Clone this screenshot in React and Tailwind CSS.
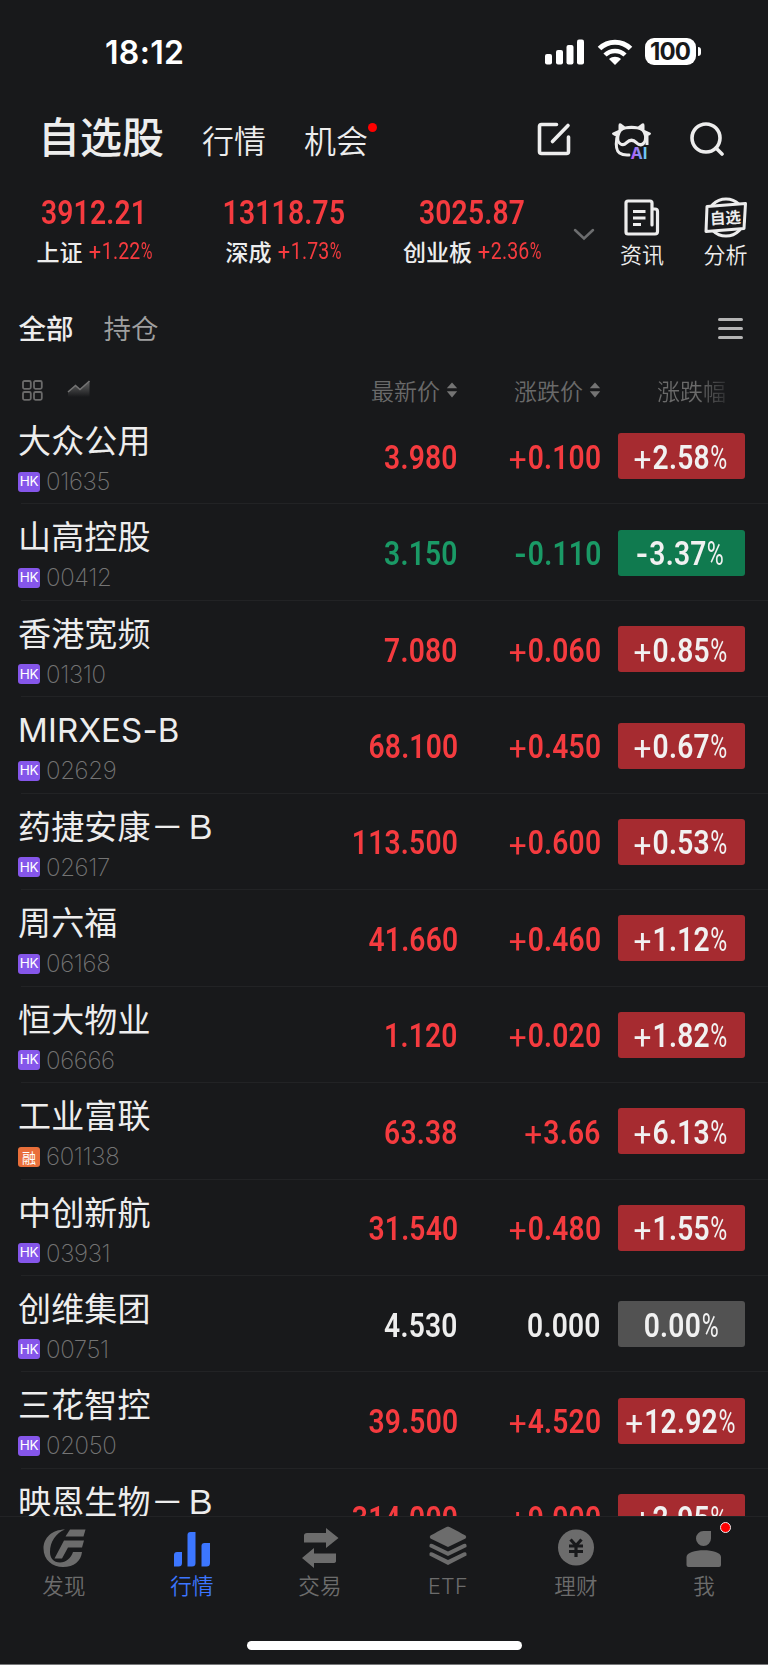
const INDICES = [
  { name: '上证', value: '3912.21', change: '+1.22%' },
  { name: '深成', value: '13118.75', change: '+1.73%' },
  { name: '创业板', value: '3025.87', change: '+2.36%' },
]

const STOCKS = [
  { name: '大众公用', code: '01635', price: '3.980', diff: '+0.100', pct: '+2.58%' },
  { name: '山高控股', code: '00412', price: '3.150', diff: '-0.110', pct: '-3.37%' },
  { name: '香港宽频', code: '01310', price: '7.080', diff: '+0.060', pct: '+0.85%' },
  { name: 'MIRXES-B', code: '02629', price: '68.100', diff: '+0.450', pct: '+0.67%' },
  { name: '药捷安康－Ｂ', code: '02617', price: '113.500', diff: '+0.600', pct: '+0.53%' },
  { name: '周六福', code: '06168', price: '41.660', diff: '+0.460', pct: '+1.12%' },
  { name: '恒大物业', code: '06666', price: '1.120', diff: '+0.020', pct: '+1.82%' },
  { name: '工业富联', code: '601138', margin: true, price: '63.38', diff: '+3.66', pct: '+6.13%' },
  { name: '中创新航', code: '03931', price: '31.540', diff: '+0.480', pct: '+1.55%' },
  { name: '创维集团', code: '00751', price: '4.530', diff: '0.000', pct: '0.00%' },
  { name: '三花智控', code: '02050', price: '39.500', diff: '+4.520', pct: '+12.92%' },
  { name: '映恩生物－Ｂ', price: '314.000', diff: '+9.000', pct: '+2.95%' },
]

const TEXT_COLOR = { up: 'text-[#f53b3f]', down: 'text-[#1a9a66]', flat: 'text-[#ededed]' }
const PILL_COLOR = { up: 'bg-[#a62b30]', down: 'bg-[#107a4f]', flat: 'bg-[#525252]' }

function trendOf(diff) {
  if (diff.startsWith('+')) return 'up'
  if (diff.startsWith('-')) return 'down'
  return 'flat'
}

// narrow figures, the percent sign is drawn lighter than the digits
function Num({ value, className = '' }) {
  const sign = /^[+-]/.test(value) ? value[0] : ''
  const isPct = value.endsWith('%')
  const digits = value.slice(sign.length, isPct ? -1 : undefined)
  return (
    <span className={`inline-block scale-x-[0.83] whitespace-nowrap font-['Roboto'] leading-none tracking-[0.008em] ${className}`}>
      {sign === '+' && <span className="relative top-[0.06em] mr-[0.03em] inline-block origin-right scale-x-[1.12] font-normal">+</span>}
      {sign === '-' && <span className="mr-[0.03em] inline-block origin-right scale-x-[1.2]">-</span>}
      {digits}
      {isPct && <span className="-mr-[0.13em] ml-[0.02em] inline-block origin-left scale-x-[0.82] font-normal">%</span>}
    </span>
  )
}

function StatusBar() {
  return (
    <div className="flex h-[103px] shrink-0 items-center justify-between pl-[105px] pr-[67px]">
      <span className="mt-[3px] font-['Inter'] text-[32px] font-semibold leading-none tracking-[0.01em] text-white">18:12</span>
      <div className="flex items-center text-white">
        <svg width="40" height="26" viewBox="0 0 40 26" fill="currentColor">
          <rect x="0" y="15" width="7" height="10.5" rx="2" />
          <rect x="11" y="11" width="7" height="14.5" rx="2" />
          <rect x="21.5" y="6" width="7" height="19.5" rx="2" />
          <rect x="32" y="0.5" width="7" height="25" rx="2" />
        </svg>
        <svg className="ml-3" width="36" height="26" viewBox="0 0 36 26" fill="none" stroke="currentColor">
          <path d="M2.5 9.5C11 1 25 1 33.5 9.5" strokeWidth="5" />
          <path d="M8 16C13.5 10.5 22.5 10.5 28 16" strokeWidth="4.5" />
          <path d="M12 20C15.5 17 20.5 17 24 20L18 26Z" fill="currentColor" stroke="none" />
        </svg>
        <div className="ml-3 flex h-[27px] w-[51px] items-center justify-center rounded-[9px] bg-white font-['Inter'] text-[24px] font-bold leading-none tracking-[-0.04em] text-[#18191b]">
          100
        </div>
        <div className="ml-[2px] h-[9px] w-[3.5px] rounded-r-full bg-white" />
      </div>
    </div>
  )
}

function MascotIcon() {
  return (
    <svg width="42" height="40" viewBox="0 0 42 40" fill="none">
      <defs>
        <linearGradient id="ai" x1="20" y1="0" x2="37" y2="0" gradientUnits="userSpaceOnUse">
          <stop offset="0" stopColor="#c054f2" />
          <stop offset="0.6" stopColor="#7d9df5" />
          <stop offset="1" stopColor="#63e6f5" />
        </linearGradient>
      </defs>
      <path d="M7.5 9V4.5Q7.5 1.5 10 2.5L14 5.5Q20.5 4 27 5.5L31 2.5Q33.5 1.5 33.5 4.5V9L39 11.5Q41 12.5 39 14L36 15.5Q36 22 32.5 24.5Q28.5 27 24.5 23Q20.5 19 16.5 23Q12.500 27 8.5 24Q5.5 22 5 15.5L2 14Q0 12.5 2 11.5Z" fill="#ededed" />
      <path d="M8.500 15Q9.500 9 15 8.2Q20.5 7.7 26 8.2Q32 9 33 15Q33.500 20 31 21.5Q28.5 23 26.5 20.5Q20.5 14.500 14.5 20.5Q12 23 10 21.5Q7.500 20 8.500 15Z" fill="#18191b" />
      <path d="M5.8 17Q4 29 8.5 32Q12 34.5 18 34" stroke="#ededed" strokeWidth="3" strokeLinecap="round" />
      <path d="M36 15V24" stroke="#ededed" strokeWidth="3" />
      <text x="19.5" y="38" fill="url(#ai)" stroke="#18191b" strokeWidth="2" paintOrder="stroke" fontFamily="Inter" fontSize="16.5" fontWeight="700">AI</text>
    </svg>
  )
}

function Header() {
  return (
    <div className="flex h-[68px] shrink-0 items-center pl-[38px] pr-[44px] text-[#ededed]">
      <span className="-mt-[4px] text-[42px] font-medium leading-none">自选股</span>
      <span className="ml-[38px] mt-[3px] text-[32px] font-[350] leading-none">行情</span>
      <span className="relative ml-[38px] mt-[3px] text-[32px] font-[350] leading-none">
        机会
        <i className="absolute -right-[9px] top-0 size-[9px] rounded-full bg-[#fe0000]" />
      </span>
      <div className="ml-auto flex items-center pt-[4px]">
        <svg width="34" height="34" viewBox="0 0 34 34" fill="none" stroke="currentColor" strokeWidth="3.6" strokeLinecap="round" strokeLinejoin="round">
          <path d="M19.5 2.5H4.5Q2.5 2.5 2.5 4.5V29.5Q2.5 31.5 4.5 31.5H29.5Q31.5 31.5 31.5 29.5V15" />
          <path d="M15.5 19.5L31 3.5" />
        </svg>
        <div className="ml-[40px] pt-[4px]">
          <MascotIcon />
        </div>
        <svg className="ml-[37px]" width="34" height="34" viewBox="0 0 34 34" fill="none" stroke="currentColor" strokeWidth="3.6" strokeLinecap="round">
          <circle cx="16" cy="16" r="14" />
          <path d="M26 26L32 32" />
        </svg>
      </div>
    </div>
  )
}

function IndexBar() {
  return (
    <div className="flex h-[119px] shrink-0 pt-[23px]">
      {INDICES.map((item) => (
        <div key={item.name} className="flex w-[189px] shrink-0 flex-col items-center pt-[1px]">
          <Num value={item.value} className="text-[34px] font-semibold text-[#f53b3f]" />
          <div className="mt-[11px] flex items-center">
            <span className="whitespace-nowrap text-[23px] font-medium leading-none text-[#ededed]">{item.name}</span>
            <span className="ml-[7px] w-[63px] leading-none">
              <Num value={item.change} className="origin-left text-[23.5px] text-[#f53b3f]" />
            </span>
          </div>
        </div>
      ))}
      <div className="flex w-[34px] justify-center pt-[34px]">
        <svg width="22" height="13" viewBox="0 0 22 13" fill="none" stroke="#6c6d6f" strokeWidth="2.5" strokeLinecap="round">
          <path d="M2 2L11 10.5L20 2" />
        </svg>
      </div>
      <div className="flex w-[83px] flex-col items-center pr-[1px] pt-[5px] text-[#ededed]">
        <svg width="36" height="37" viewBox="0 0 36 37" fill="none" stroke="currentColor" strokeWidth="3.2" strokeLinejoin="round">
          <path d="M28 10H31Q33.5 10 33.5 12.5V32.5Q33.5 35 31 35H4Q2 35 2 33V4Q2 2 4 2H26Q28 2 28 4V26" strokeLinecap="round" />
          <path d="M9 12.5H21.5M9 19H21.5M9 25.5H17" />
        </svg>
        <span className="mt-[6px] text-[22px] font-[350] leading-none">资讯</span>
      </div>
      <div className="flex w-[83px] flex-col items-center pt-[3px] text-[#ededed]">
        <svg width="44" height="41" viewBox="0 0 44 41" fill="none" stroke="currentColor" strokeWidth="3">
          <circle cx="22" cy="20.5" r="18.5" />
          <path d="M3 9.5L41.5 6.5L40 31.5L2 34.5Z" fill="#18191b" strokeLinejoin="round" />
          <text x="21.5" y="26.5" textAnchor="middle" fill="currentColor" stroke="none" fontFamily="Noto Sans CJK SC" fontSize="15.5" fontWeight="700" transform="rotate(-3 21 20)">自选</text>
        </svg>
        <span className="mt-[4px] text-[22px] font-[350] leading-none">分析</span>
      </div>
    </div>
  )
}

function GroupTabs() {
  return (
    <div className="flex h-[76px] shrink-0 items-center pl-[18.5px] pr-[25px]">
      <span className="-mt-[1px] text-[27.5px] font-medium leading-none text-[#ededed]">全部</span>
      <span className="-mt-[1px] ml-[30px] text-[27.5px] font-[350] leading-none text-[#a0a0a0]">持仓</span>
      <div className="ml-auto flex w-[25px] flex-col gap-[6px]">
        <i className="h-[3px] rounded-full bg-[#b4b4b4]" />
        <i className="h-[3px] rounded-full bg-[#b4b4b4]" />
        <i className="h-[3px] rounded-full bg-[#b4b4b4]" />
      </div>
    </div>
  )
}

function SortIcon() {
  return (
    <svg width="12" height="16" viewBox="0 0 12 16" fill="#747474">
      <path d="M6 0.5L11.2 6.2H0.8Z" />
      <path d="M6 15.5L11.2 9.2H0.8Z" />
    </svg>
  )
}

function TableHead() {
  return (
    <div className="flex h-[42px] shrink-0 items-center pl-[22px] pt-[6px] text-[23px] font-[350] leading-none text-[#6a6a6a]">
      <svg width="21" height="21" viewBox="0 0 21 21" fill="none" stroke="currentColor" strokeWidth="1.8">
        <rect x="1" y="1" width="7.8" height="7.8" rx="1.5" />
        <rect x="12" y="1" width="7.8" height="7.8" rx="1.5" />
        <rect x="1" y="12" width="7.8" height="7.8" rx="1.5" />
        <rect x="12" y="12" width="7.8" height="7.8" rx="1.5" />
      </svg>
      <svg className="ml-[24px]" width="24" height="20" viewBox="0 0 24 20" fill="none">
        <defs>
          <linearGradient id="trend" x1="0" y1="2" x2="0" y2="17" gradientUnits="userSpaceOnUse">
            <stop offset="0" stopColor="#747474" stopOpacity="0.8" />
            <stop offset="1" stopColor="#747474" stopOpacity="0" />
          </linearGradient>
        </defs>
        <path d="M1 12L8.5 5.5L13 9.5L22.5 1V18H1Z" fill="url(#trend)" />
        <path d="M1 12L8.5 5.5L13 9.5L22.5 1" stroke="#747474" strokeWidth="1.6" />
      </svg>
      <div className="flex flex-1 items-center justify-end gap-[6px]">
        最新价
        <SortIcon />
      </div>
      <div className="flex w-[143px] items-center justify-end gap-[6px]">
        涨跌价
        <SortIcon />
      </div>
      <div className="w-[167px] pl-[56px]">
        <span className="bg-linear-to-r from-[#6a6a6a] from-60% to-[#2e2f31] bg-clip-text text-transparent">涨跌幅</span>
      </div>
    </div>
  )
}

function StockRow({ stock }) {
  const trend = trendOf(stock.diff)
  return (
    <div className="flex h-[96.45px] flex-col">
      <div className="flex flex-1 pl-[18px] pr-[23px]">
        <div className="flex flex-1 flex-col">
          <span className="mt-[16px] h-[34px] whitespace-nowrap font-['Inter','Noto_Sans_CJK_SC',sans-serif] text-[33px] font-[370] leading-[34px] tracking-[0.005em] text-[#ededed]">{stock.name}</span>
          {stock.code && (
            <div className="mt-[13px] flex items-center">
              {stock.margin ? (
                <span className="flex h-5 w-[22px] items-center justify-center rounded-[3px] bg-[#e96f3a] text-[14px] leading-none text-white">融</span>
              ) : (
                <span className="flex h-5 w-[22px] items-center justify-center rounded-[3px] bg-[#8556ea] font-['Inter'] text-[13.5px] leading-none tracking-[-0.03em] text-white">HK</span>
              )}
              <span className="ml-[6px] mt-[1px] font-['Inter'] text-[24px] font-extralight leading-5 tracking-[-0.015em] text-[#747474]">{stock.code}</span>
            </div>
          )}
        </div>
        <div className="flex w-[150px] items-center justify-end pt-[2px]">
          <Num value={stock.price} className={`origin-right text-[34px] font-semibold ${TEXT_COLOR[trend]}`} />
        </div>
        <div className="flex w-[143px] items-center justify-end pt-[2px]">
          <Num value={stock.diff} className={`origin-right text-[34px] font-semibold ${TEXT_COLOR[trend]}`} />
        </div>
        <div className="flex w-[144px] items-center justify-end pt-[1px]">
          <div className={`flex h-[46px] w-[127px] items-center justify-center rounded-[3px] pt-[1px] ${PILL_COLOR[trend]}`}>
            <Num value={stock.pct} className="text-[34px] font-semibold text-[#f1f1f1]" />
          </div>
        </div>
      </div>
      <div className="ml-[21px] h-px bg-[#222325]" />
    </div>
  )
}

const TABS = [
  {
    label: '发现',
    icon: (
      <>
        <path d="M22 0.5C9 0.5 0.5 9 0.5 19.5C0.5 31 9.5 38 20 38C31 38 38 32 39 23H30C28 29 23 33.5 17 33.5C10.5 33.5 7 29 7 23C7 12.5 13 4 22 0.5Z" />
        <path d="M27 0.5H42.5L40.5 7.5H22.5Z" />
        <path d="M21 11.5H41L39 18.5H25L19 29.5H11.5Z" />
      </>
    ),
  },
  {
    label: '行情',
    active: true,
    icon: (
      <>
        <path d="M3 26Q3 23 6 23H11V34Q11 37.5 7.5 37.5H3Z" />
        <path d="M16.5 6Q16.5 3 19.5 3H24.5V34Q24.5 37.5 21 37.5H16.5Z" />
        <path d="M30.5 17Q30.5 14 33.5 14H39V34Q39 37.5 35.5 37.5H30.5Z" />
      </>
    ),
  },
  {
    label: '交易',
    icon: (
      <>
        <path d="M5 6.5Q5 4 8 4H27V-1L39.5 9L27 19V13.5H5Z" />
        <path d="M37 32Q37 34 34 34H15V39L3 29L15 19V24.5H37Z" />
      </>
    ),
  },
  {
    label: 'ETF',
    icon: (
      <>
        <path d="M21 -2.5Q20 -2.5 3.5 6.5Q2 8 3.5 9.5L21 18L38.5 9.5Q40 8 38.5 6.5Q22 -2.5 21 -2.5Z" />
        <path d="M2.5 16Q3 14 5.5 15L21 22.5L36.5 15Q39 14 39.5 16V18L21 27L2.5 18Z" />
        <path d="M2.5 24.5Q3 22.5 5.5 23.5L21 31L36.5 23.5Q39 22.5 39.5 24.5V26.5L21 36L2.5 26.5Z" />
      </>
    ),
  },
  {
    label: '理财',
    icon: (
      <>
        <circle cx="21" cy="18.5" r="18" />
        <path d="M15.5 10.5L21 16.5L26.5 10.5M14 17H28M14 22.5H28M21 16.5V28" fill="none" stroke="#18191b" strokeWidth="3.2" />
      </>
    ),
  },
  {
    label: '我',
    dot: true,
    icon: (
      <>
        <path d="M20.5 2H28V9.5A7.5 7.5 0 1 1 20.5 2Z" />
        <path d="M3.5 28C3.5 19 38 19 38 28V36Q38 38 36 38H5.5Q3.5 38 3.5 36Z" />
      </>
    ),
  },
]

function TabBar() {
  return (
    <div className="h-[149px] shrink-0 border-b border-t border-b-[#77787a] border-t-[#222325] bg-[#18191b]">
      <div className="grid h-[124px] grid-cols-6">
        {TABS.map((tab) => (
          <div key={tab.label} className={`flex flex-col items-center pt-[12px] ${tab.active ? 'text-[#3c76ff]' : 'text-[#6c6c6c]'}`}>
            <div className="relative">
              <svg className="overflow-visible" width="42" height="40" viewBox="0 0 42 40" fill="currentColor">{tab.icon}</svg>
              {tab.dot && <i className="absolute -right-[6px] -top-[7px] size-[11px] rounded-full border border-[#ededed] bg-[#fe0000]" />}
            </div>
            <span className="mt-[5px] font-['Inter','Noto_Sans_CJK_SC',sans-serif] text-[21.5px] font-[350] leading-[24px] tracking-[0.01em]">{tab.label}</span>
          </div>
        ))}
      </div>
      <div className="mx-auto h-[9px] w-[275px] rounded-full bg-white" />
    </div>
  )
}

export default function App() {
  return (
    <div className="flex h-[1665px] w-[768px] flex-col overflow-hidden bg-[#18191b] font-['Noto_Sans_CJK_SC',sans-serif]">
      <StatusBar />
      <Header />
      <IndexBar />
      <GroupTabs />
      <TableHead />
      <div className="min-h-0 flex-1 overflow-hidden">
        {STOCKS.map((stock) => (
          <StockRow key={stock.name} stock={stock} />
        ))}
      </div>
      <TabBar />
    </div>
  )
}
